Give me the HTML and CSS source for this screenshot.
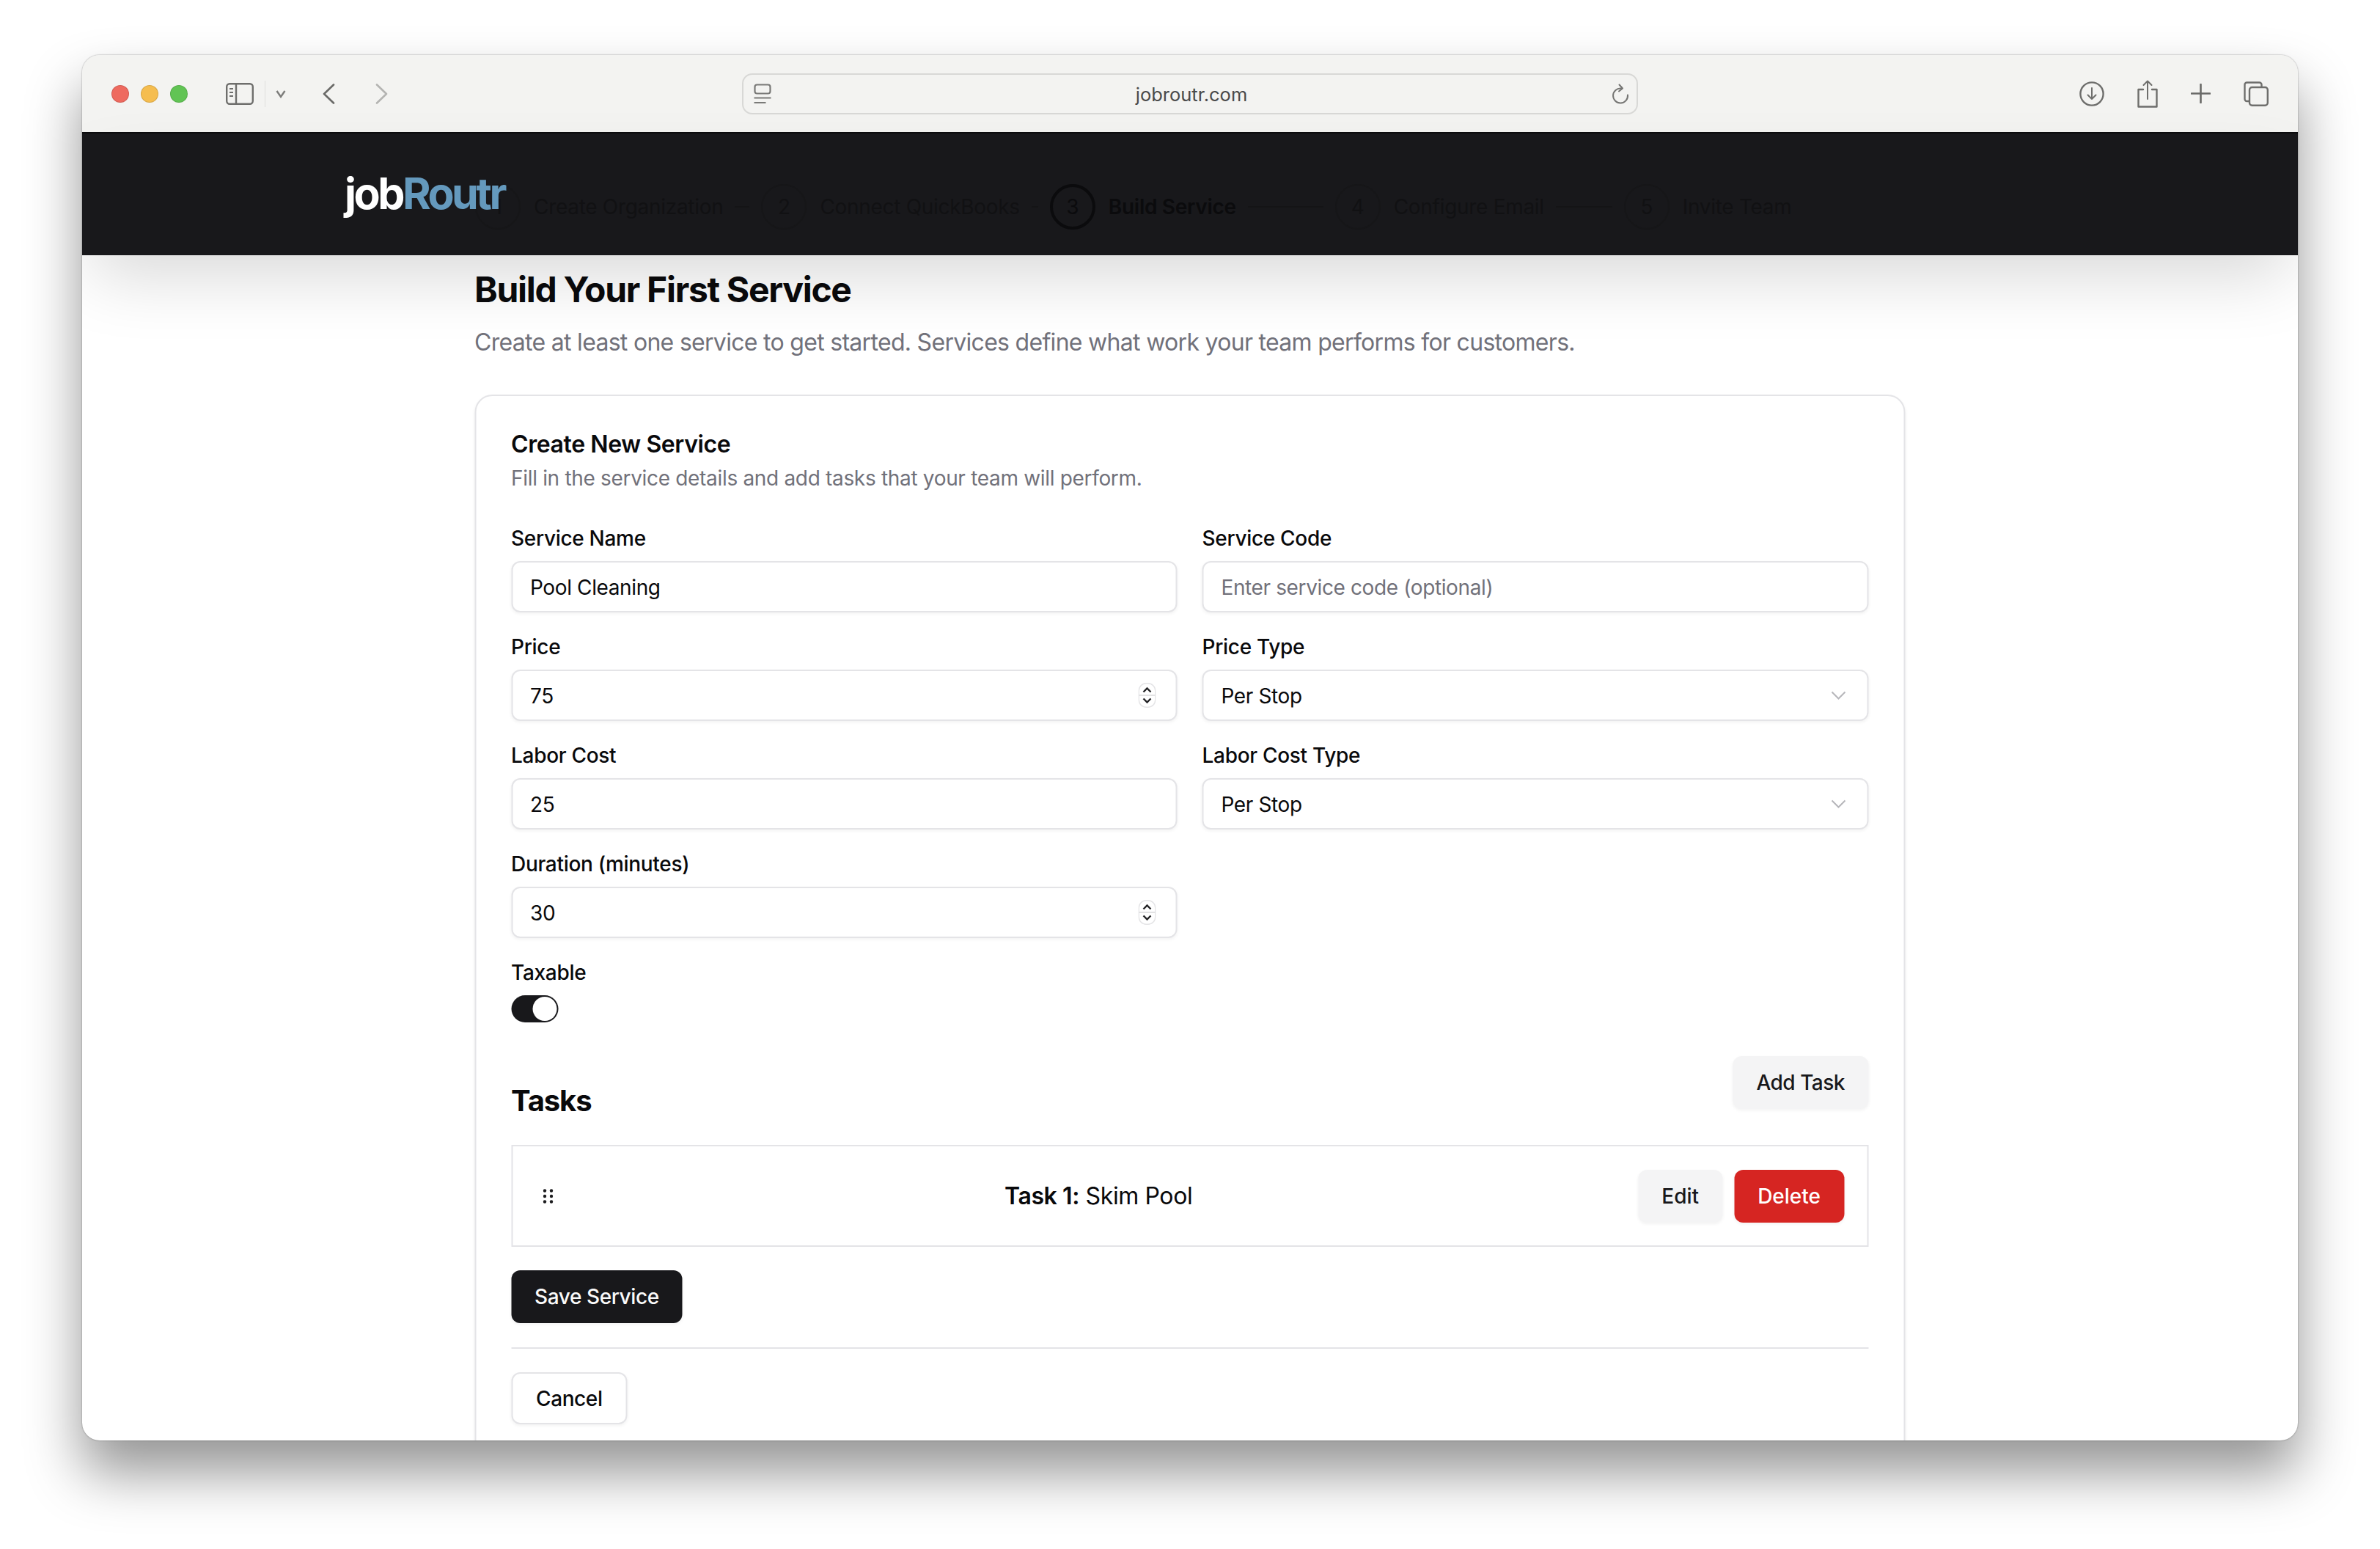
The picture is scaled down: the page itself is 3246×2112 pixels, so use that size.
FILE: index.html
```html
<!DOCTYPE html>
<html lang="en">
<head>
<meta charset="utf-8">
<title>jobRoutr</title>
<link rel="stylesheet" href="styles.css">
</head>
<body>
<div class="window">
  <div class="toolbar">
    <div class="tb-left">
      <span class="light red"></span><span class="light amber"></span><span class="light green"></span>
      <svg class="ic-sidebar" width="38" height="30" viewBox="0 0 38 30" fill="none" stroke="#6e6e6c" stroke-width="2.4"><rect x="1.2" y="1.2" width="35.6" height="27.6" rx="4"/><path d="M14 1.2v27.6"/><path d="M5 8h5M5 13h5M5 18h5" stroke-width="2"/></svg>
      <span class="tb-sep"></span>
      <svg class="ic-caret" width="14" height="12" viewBox="0 0 14 12" fill="none" stroke="#7c7c7a" stroke-width="2.4"><path d="M1.5 2 7 10l5.500-8"/></svg>
      <svg class="ic-back" width="17" height="28" viewBox="0 0 17 28" fill="none" stroke="#6a6a68" stroke-width="2.6" stroke-linecap="round" stroke-linejoin="round"><path d="M15 1.500 2 14l13 12.500"/></svg>
      <svg class="ic-forward" width="17" height="28" viewBox="0 0 17 28" fill="none" stroke="#b4b4b2" stroke-width="2.6" stroke-linecap="round" stroke-linejoin="round"><path d="M2 1.500 15 14 2 26.500"/></svg>
    </div>
    <div class="urlbar">
      <svg width="24" height="28" viewBox="0 0 24 28" fill="none" stroke="#7a7a78" stroke-width="2.2"><rect x="1.500" y="1.500" width="21" height="12" rx="3"/><path d="M.5 19.500h23M.5 26h16"/></svg>
      <span class="url-text">jobroutr.com</span>
      <svg width="24" height="28" viewBox="0 0 24 28" fill="none" stroke="#757573" stroke-width="2" stroke-linecap="round" stroke-linejoin="round"><path d="M13 6.500a10 10 0 1 0 9 9"/><path d="M10.500 1.500 15 6.500l-5 4"/></svg>
    </div>
    <div class="tb-right">
      <svg width="34" height="34" viewBox="0 0 34 34" fill="none" stroke="#6e6e6c" stroke-width="2.4" stroke-linecap="round" stroke-linejoin="round"><circle cx="17" cy="17" r="15.600"/><path d="M17 9v15M11.500 18.500 17 24l5.500-5.500" stroke-width="2"/></svg>
      <svg width="28" height="38" viewBox="0 0 28 38" fill="none" stroke="#6e6e6c" stroke-width="2.4" stroke-linecap="round" stroke-linejoin="round"><path d="M8 13H1.500v23.500h25V13H20"/><path d="M14 26V1.500M8.500 7 14 1.500 19.500 7" stroke-width="2"/></svg>
      <svg width="27" height="27" viewBox="0 0 27 27" fill="none" stroke="#6a6a68" stroke-width="2.6" stroke-linecap="round"><path d="M13.500 1v25M1 13.500h25"/></svg>
      <svg width="34" height="34" viewBox="0 0 34 34" fill="none" stroke="#6e6e6c" stroke-width="2.4"><path d="M7 27H4.500a3 3 0 0 1-3-3V4.500a3 3 0 0 1 3-3h17a3 3 0 0 1 3 3V7"/><rect x="8" y="8" width="24.800" height="24.800" rx="3.500"/></svg>
    </div>
  </div>

  <header class="topbar">
    <div class="logo">job<span class="logo-accent">Routr</span></div>
    <ol class="steps">
      <li class="step"><span class="step-num">1</span><span class="step-name">Create Organization</span></li>
      <li class="step-line line-a"></li>
      <li class="step"><span class="step-num">2</span><span class="step-name">Connect QuickBooks</span></li>
      <li class="step-line line-b"></li>
      <li class="step is-active"><span class="step-num">3</span><span class="step-name">Build Service</span></li>
      <li class="step-line line-c"></li>
      <li class="step"><span class="step-num">4</span><span class="step-name">Configure Email</span></li>
      <li class="step-line line-d"></li>
      <li class="step"><span class="step-num">5</span><span class="step-name">Invite Team</span></li>
    </ol>
  </header>

  <main class="main">
    <h1 class="page-title">Build Your First Service</h1>
    <p class="page-sub">Create at least one service to get started. Services define what work your team performs for customers.</p>

    <section class="card">
      <h2 class="card-title">Create New Service</h2>
      <p class="card-sub">Fill in the service details and add tasks that your team will perform.</p>

      <div class="form-grid">
        <div class="field"><div class="label">Service Name</div><div class="control">Pool Cleaning</div></div>
        <div class="field"><div class="label">Service Code</div><div class="control is-placeholder">Enter service code (optional)</div></div>

        <div class="field"><div class="label">Price</div><div class="control">75
          <svg class="spinner" width="24" height="34" viewBox="0 0 24 34" fill="none"><rect x=".75" y=".75" width="22.500" height="32.500" rx="10" fill="#fff" stroke="#e4e4e6" stroke-width="1.500"/><path d="M1 17h22" stroke="#d8d8da" stroke-width="1.500"/><path d="M7 12.500 12 7.500l5 5M7 21.500l5 5 5-5" stroke="#232325" stroke-width="2.400"/></svg>
        </div></div>
        <div class="field"><div class="label">Price Type</div><div class="control">Per Stop
          <svg class="chev" width="20" height="12" viewBox="0 0 20 12" fill="none" stroke="#b6b6ba" stroke-width="2"><path d="M1 1.500 10 10.500l9-9"/></svg>
        </div></div>

        <div class="field"><div class="label">Labor Cost</div><div class="control">25</div></div>
        <div class="field"><div class="label">Labor Cost Type</div><div class="control">Per Stop
          <svg class="chev" width="20" height="12" viewBox="0 0 20 12" fill="none" stroke="#b6b6ba" stroke-width="2"><path d="M1 1.500 10 10.500l9-9"/></svg>
        </div></div>

        <div class="field"><div class="label">Duration (minutes)</div><div class="control">30
          <svg class="spinner" width="24" height="34" viewBox="0 0 24 34" fill="none"><rect x=".75" y=".75" width="22.500" height="32.500" rx="10" fill="#fff" stroke="#e4e4e6" stroke-width="1.500"/><path d="M1 17h22" stroke="#d8d8da" stroke-width="1.500"/><path d="M7 12.500 12 7.500l5 5M7 21.500l5 5 5-5" stroke="#232325" stroke-width="2.400"/></svg>
        </div></div>
        <div class="field-empty"></div>

        <div class="field"><div class="label">Taxable</div><div class="toggle"><span class="toggle-knob"></span></div></div>
      </div>

      <div class="tasks-head">
        <h3 class="tasks-title">Tasks</h3>
        <button class="btn btn-soft btn-add">Add Task</button>
      </div>

      <div class="task-row">
        <svg class="grip" width="14" height="20" viewBox="0 0 14 20" fill="#1c1c1e"><circle cx="2.500" cy="2.500" r="2.200"/><circle cx="11.500" cy="2.500" r="2.200"/><circle cx="2.500" cy="10" r="2.200"/><circle cx="11.500" cy="10" r="2.200"/><circle cx="2.500" cy="17.500" r="2.200"/><circle cx="11.500" cy="17.500" r="2.200"/></svg>
        <div class="task-text"><strong class="task-key">Task 1:</strong> Skim Pool</div>
        <div class="task-actions">
          <button class="btn btn-soft">Edit</button>
          <button class="btn btn-danger">Delete</button>
        </div>
      </div>

      <button class="btn btn-dark save">Save Service</button>
      <hr class="divider">
      <button class="btn btn-outline">Cancel</button>
    </section>
  </main>
</div>
</body>
</html>
```

FILE: styles.css
```css
* { box-sizing: border-box; }
html, body { margin: 0; height: 2112px; background: #fff; overflow: hidden; }
body {
  padding: 75px 112px 148px;
  font-family: Inter, "Liberation Sans", sans-serif;
  color: #09090b;
}
.window {
  width: 3022px;
  height: 1889px;
  background: #fff;
  border-radius: 24px;
  overflow: hidden;
  box-shadow: 0 0 2px rgba(0,0,0,.45), 0 44px 76px rgba(0,0,0,.42);
}

/* Browser toolbar */
.toolbar {
  height: 105px;
  background: #f3f3f1;
  display: grid;
  grid-template-columns: 1fr 1222px 1fr;
  align-items: center;
  padding: 0 40px;
}
.tb-left, .tb-right { display: flex; align-items: center; }
.tb-right { justify-content: flex-end; gap: 45px; }
.light { width: 24px; height: 24px; border-radius: 50%; margin-right: 16px; border: 1px solid rgba(0,0,0,.12); }
.red { background: #ee6a5f; }
.amber { background: #f5bd4f; }
.green { background: #61c454; }
.ic-sidebar { margin-left: 36px; }
.tb-sep { width: 1px; height: 36px; background: #dededc; margin-left: 15px; }
.ic-caret { margin-left: 14px; }
.ic-back { margin-left: 50px; }
.ic-forward { margin-left: 55px; }
.urlbar {
  height: 56px;
  border: 2px solid #d8d8d6;
  border-radius: 14px;
  display: flex;
  align-items: center;
  justify-content: space-between;
  padding: 0 10px 0 14px;
}
.url-text { font-size: 25.5px; color: #4a4a4a; position: relative; top: 1px; }

/* App header */
.topbar {
  height: 168px;
  background: #18181b;
  border-top: 2px solid #0b0b0d;
  display: flex;
  align-items: center;
  padding-left: 358px;
  position: relative;
  box-shadow: 0 44px 90px -14px rgba(0,0,0,.15);
}
.logo {
  position: relative;
  z-index: 1;
  font-size: 59px;
  font-weight: 700;
  letter-spacing: -3.5px;
  color: #fff;
  width: 220px;
  margin-right: -42px;
  white-space: nowrap;
  padding-bottom: 3px;
}
.logo-accent { color: #6499bd; }
.steps {
  list-style: none;
  margin: 34px 0 0;
  padding: 0;
  display: flex;
  align-items: center;
}
.step { display: flex; align-items: center; gap: 18px; color: #111113; font-size: 28px; letter-spacing: -.3px; white-space: nowrap; }
.step-num {
  width: 62px;
  height: 62px;
  border-radius: 50%;
  border: 2px solid #161618;
  display: flex;
  align-items: center;
  justify-content: center;
}
.is-active { color: #0b0b0d; font-weight: 600; }
.is-active .step-num { border: 4px solid #0b0b0d; font-weight: 400; }
.step-line { height: 2px; background: #141416; margin: 0 16px; }
.line-a { width: 20px; }
.line-b { width: 9px; }
.line-c { width: 103px; }
.line-d { width: 77px; }

/* Main */
.main { width: 1951px; margin: 0 auto; transform: translateX(-.5px); padding-top: 19px; }
.page-title { margin: 0; font-size: 48px; line-height: 56px; font-weight: 650; letter-spacing: -1.3px; }
.page-sub { margin: 20px 0 0; font-size: 32px; line-height: 48px; letter-spacing: -.7px; color: #71717a; }
.card {
  margin-top: 47px;
  border: 2px solid #e4e4e7;
  border-radius: 24px;
  padding: 50px 48px 0;
  background: #fff;
  height: 1600px;
  box-shadow: 0 2px 4px rgba(0,0,0,.05);
}
.card-title { margin: 0; font-size: 32px; line-height: 32px; font-weight: 600; letter-spacing: -.4px; }
.card-sub { margin: 10px 0 0; font-size: 28px; line-height: 40px; letter-spacing: -.32px; color: #71717a; }
.form-grid { display: grid; grid-template-columns: 1fr 1fr; column-gap: 34px; row-gap: 27px; margin-top: 42px; }
.label { font-size: 28px; line-height: 40px; font-weight: 500; letter-spacing: -.3px; margin-bottom: 11px; }
.control {
  height: 70px;
  border: 2px solid #e4e4e7;
  border-radius: 12px;
  padding: 2px 24px 0;
  font-size: 28px;
  letter-spacing: -.38px;
  display: flex;
  align-items: center;
  justify-content: space-between;
  box-shadow: 0 2px 4px rgba(0,0,0,.05);
  background: #fff;
}
.is-placeholder { color: #71717a; }
.spinner { margin-right: 3px; margin-top: -2px; }
.chev { margin-right: 5px; margin-top: -2px; }
.toggle {
  width: 64px;
  height: 37px;
  border-radius: 19px;
  background: #18181b;
  padding: 2px;
  display: flex;
  justify-content: flex-end;
}
.toggle-knob { width: 33px; height: 33px; border-radius: 50%; background: #fff; }

.tasks-head { display: flex; justify-content: space-between; align-items: flex-start; margin-top: 46px; height: 89px; }
.tasks-title { margin: 0; align-self: flex-end; font-size: 40px; line-height: 56px; font-weight: 650; letter-spacing: -1.1px; }

.btn {
  font-family: inherit;
  font-size: 28px;
  font-weight: 500;
  letter-spacing: -.4px;
  height: 72px;
  padding: 0 32px;
  border: 0;
  border-radius: 12px;
  box-shadow: 0 2px 4px rgba(0,0,0,.05);
  color: #18181b;
}
.btn-add { letter-spacing: -.5px; }
.btn-soft { background: #f4f4f5; }
.btn-danger { background: #d62522; color: #fff; }
.btn-dark { background: #18181b; color: #fafafa; }
.btn-outline { background: #fff; border: 2px solid #e4e4e7; color: #09090b; height: 71px; padding: 0 32px; }

.task-row {
  margin-top: 32px;
  height: 139px;
  border: 2px solid #e4e4e7;
  display: flex;
  align-items: center;
  padding: 0 31px 0 41px;
}
.grip { flex: none; }
.task-text { flex: 1; text-align: center; font-size: 32px; letter-spacing: -.4px; padding-left: 8px; }
.task-key { font-weight: 600; }
.task-actions { display: flex; gap: 16px; }
.task-actions .btn { letter-spacing: 0; }
.save { display: block; margin-top: 32px; }
.divider { margin: 33px 0 32px; border: 0; height: 2px; background: #e4e4e7; }
```
